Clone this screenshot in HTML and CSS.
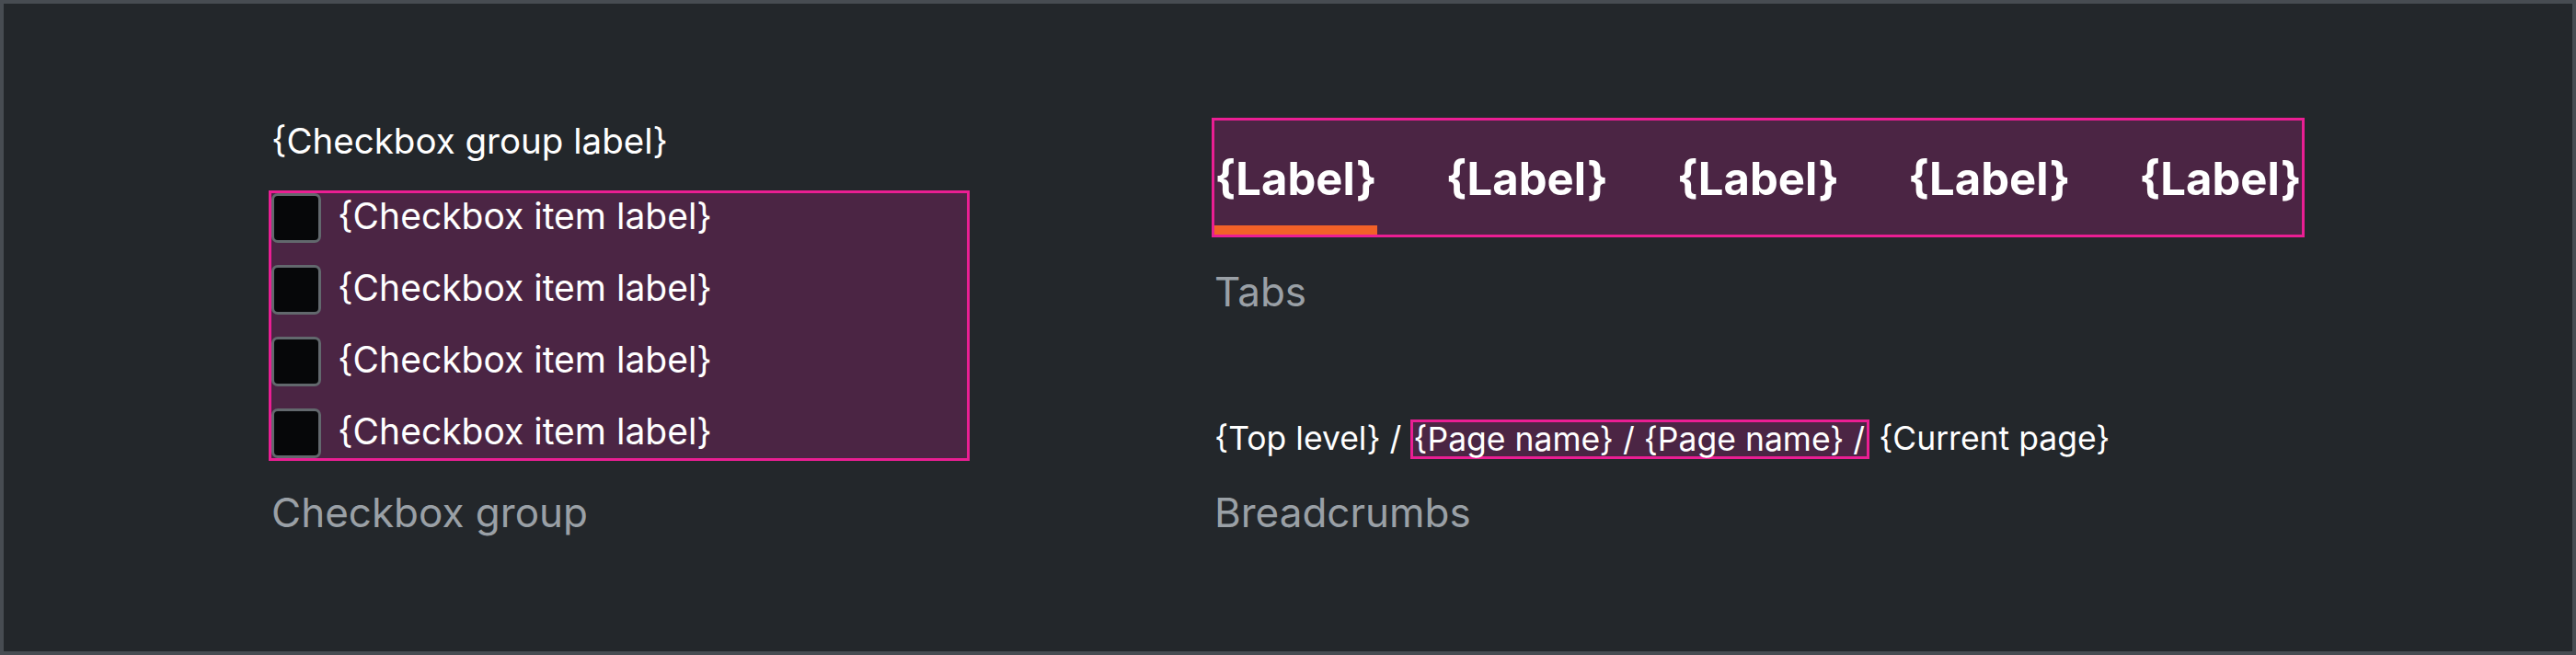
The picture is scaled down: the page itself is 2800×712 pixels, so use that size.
FILE: index.html
```html
<!DOCTYPE html>
<html lang="en">
<head>
<meta charset="utf-8">
<title>Components</title>
<link rel="stylesheet" href="styles.css">
</head>
<body>
<div class="frame">
  <section class="col col-left">
    <div class="group-label">{Checkbox group label}</div>
    <div class="hl-box cb-list">
      <div class="cb-row"><span class="cb"></span><span class="cb-text">{Checkbox item label}</span></div>
      <div class="cb-row"><span class="cb"></span><span class="cb-text">{Checkbox item label}</span></div>
      <div class="cb-row"><span class="cb"></span><span class="cb-text">{Checkbox item label}</span></div>
      <div class="cb-row"><span class="cb"></span><span class="cb-text">{Checkbox item label}</span></div>
    </div>
    <div class="caption caption-cb">Checkbox group</div>
  </section>
  <section class="col col-right">
    <div class="hl-box tabs">
      <div class="tab active"><span class="tab-text">{Label}</span><span class="tab-bar"></span></div>
      <div class="tab"><span class="tab-text">{Label}</span><span class="tab-bar"></span></div>
      <div class="tab"><span class="tab-text">{Label}</span><span class="tab-bar"></span></div>
      <div class="tab"><span class="tab-text">{Label}</span><span class="tab-bar"></span></div>
      <div class="tab"><span class="tab-text">{Label}</span><span class="tab-bar"></span></div>
    </div>
    <div class="caption caption-tabs">Tabs</div>
    <div class="crumbs">
      <span class="crumb">{Top level} /&nbsp;</span><span class="hl-box crumb-box">{Page name} / {Page name} /</span><span class="crumb">&nbsp;{Current page}</span>
    </div>
    <div class="caption caption-crumbs">Breadcrumbs</div>
  </section>
</div>
</body>
</html>
```
FILE: styles.css
```css
html, body {
  margin: 0;
  padding: 0;
  background: #23272b;
}
body {
  width: 2800px;
  height: 712px;
  font-family: "Inter", "Noto Sans", sans-serif;
  color: #ffffff;
}
.frame {
  box-sizing: border-box;
  width: 2800px;
  height: 712px;
  border: 4px solid #474c52;
  background: #23272b;
  padding: 124px 0 0 288px;
  display: flex;
  align-items: flex-start;
  gap: 263px;
}
.col {
  display: flex;
  flex-direction: column;
}
.col-left { width: 762px; }
.col-right { width: 1188px; }

.hl-box {
  box-sizing: border-box;
  background: #4b2544;
  border: 3px solid #ea1e93;
}

.group-label {
  font-size: 38.5px;
  line-height: 48px;
  height: 48px;
  padding-left: 3px;
  margin-top: 1px;
}
.cb-list {
  margin-top: 30px;
  display: flex;
  flex-direction: column;
  gap: 24px;
}
.cb-row {
  display: flex;
  align-items: center;
  gap: 18px;
  height: 54px;
}
.cb {
  box-sizing: border-box;
  width: 54px;
  height: 54px;
  flex: none;
  border: 3px solid #62686d;
  border-radius: 7px;
  background: #060709;
}
.cb-text {
  font-size: 39px;
  line-height: 48px;
  margin-top: -5px;
}

.caption {
  color: #9aa0a6;
  font-size: 44px;
  line-height: 54px;
  padding-left: 3px;
}
.caption-cb { margin-top: 29px; }

.tabs {
  height: 130px;
  display: flex;
  justify-content: space-between;
}
.tab {
  box-sizing: border-box;
  width: 177px;
  display: flex;
  flex-direction: column;
  align-items: center;
}
.tab-text {
  font-weight: 700;
  font-size: 49px;
  line-height: 58px;
  padding-top: 35px;
  height: 58px;
}
.tab-bar {
  margin-top: auto;
  width: 100%;
  height: 10px;
}
.tab.active .tab-bar { background: #f26128; }

.caption-tabs { margin-top: 32px; }

.crumbs {
  margin-top: 110px;
  height: 46px;
  display: flex;
  align-items: center;
  padding-left: 3px;
  font-size: 35.5px;
  line-height: 46px;
  white-space: nowrap;
}
.crumb-box {
  height: 43px;
  line-height: 37px;
  display: inline-flex;
  align-items: center;
  padding: 0 2px 0 0;
}
.caption-crumbs { margin-top: 30px; }
```
